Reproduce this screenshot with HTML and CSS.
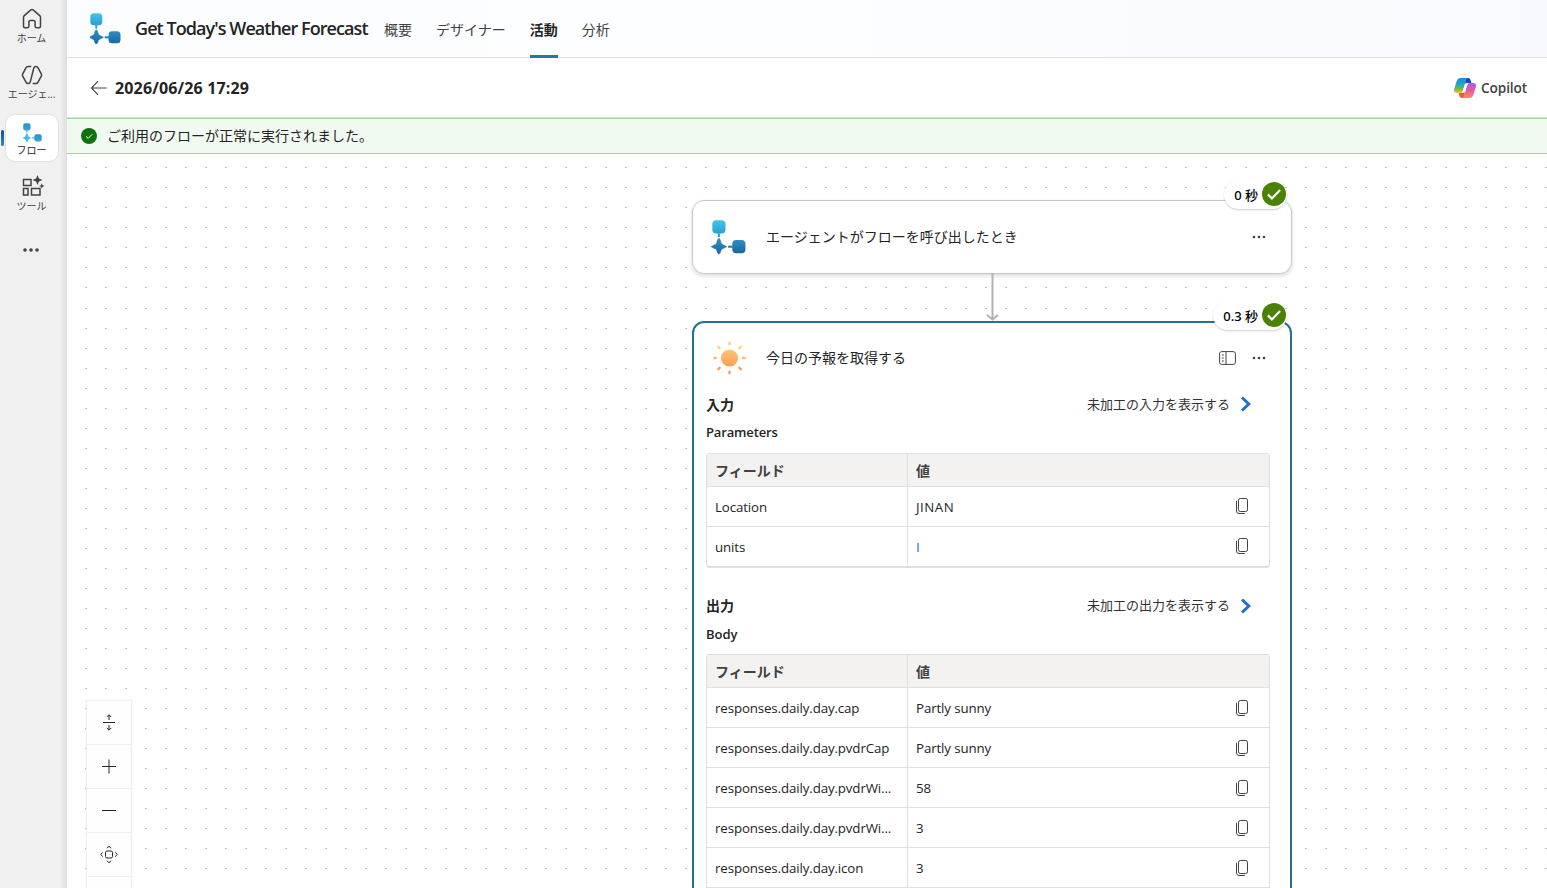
FILE: index.html
```html
<!DOCTYPE html>
<html lang="ja">
<head>
    <meta charset="UTF-8">
    <meta name="viewport" content="width=device-width, initial-scale=1.0">
    <title>Get Today's Weather Forecast</title>
    <link rel="stylesheet" href="styles.css">
</head>
<body>
    <!-- Shared icons -->
    <svg class="defs" width="0" height="0">
        <defs>
            <linearGradient id="flowTop" x1="0" y1="0" x2="0" y2="1">
                <stop offset="0" stop-color="#40c4ea"/><stop offset="1" stop-color="#2d9fd0"/>
            </linearGradient>
            <linearGradient id="flowBottom" x1="0" y1="0" x2="0" y2="1">
                <stop offset="0" stop-color="#2c8fc4"/><stop offset="1" stop-color="#1c669f"/>
            </linearGradient>
            <linearGradient id="flowLight" x1="0" y1="0" x2="0" y2="1">
                <stop offset="0" stop-color="#2a8fc9"/><stop offset="1" stop-color="#36a8d9"/>
            </linearGradient>
            <linearGradient id="sunFill" x1="0" y1="0" x2="0" y2="1">
                <stop offset="0" stop-color="#ffc57c"/><stop offset="1" stop-color="#fd9f51"/>
            </linearGradient>
            <linearGradient id="copBlue" x1="0" y1="0" x2="0" y2="1">
                <stop offset="0" stop-color="#1a8fe6"/><stop offset=".4" stop-color="#24a3c4"/><stop offset=".7" stop-color="#69b65b"/><stop offset="1" stop-color="#f5c518"/>
            </linearGradient>
            <linearGradient id="copPink" x1="0" y1="0" x2="0" y2="1">
                <stop offset="0" stop-color="#a45cf0"/><stop offset=".5" stop-color="#ea5a9b"/><stop offset="1" stop-color="#fb8a6a"/>
            </linearGradient>
            <symbol id="flow" viewBox="0 0 31 31" overflow="visible">
                <rect x="0.3" y="0.3" width="12" height="12" rx="3.6" fill="url(#flowTop)"/>
                <path d="M5.3 12h1.9v3.6H5.3z" fill="#2d9fd0"/>
                <path d="M6.3 16.8c1.7 0 1.4 4.200 2.900 5.300l4.300 2.200-4.300 2.200c-1.500 1.100-1.200 4.500-2.900 4.500s-1.400-3.400-2.900-4.500l-4.300-2.200 4.300-2.200C4.900 21 4.600 16.800 6.300 16.800z" fill="url(#flowBottom)" stroke="#237ab0" stroke-width=".5"/>
                <path d="M14.7 23.4H19v1.9h-4.3z" fill="#237ab0"/>
                <rect x="18.5" y="18.3" width="12" height="12" rx="3.6" fill="url(#flowBottom)"/>
            </symbol>
            <symbol id="copy" viewBox="0 0 14 18">
                <rect x="3.5" y="1.5" width="9" height="13" rx="1.8"/>
                <path d="M1.5 3.8v10.200a2.500 2.500 0 0 0 2.500 2.500h5.800"/>
            </symbol>
            <symbol id="dots" viewBox="0 0 14 4">
                <circle cx="2" cy="2" r="1.3"/><circle cx="7" cy="2" r="1.3"/><circle cx="12" cy="2" r="1.3"/>
            </symbol>
            <symbol id="chevron" viewBox="0 0 12 16">
                <path d="M2 1.500L8.800 8 2 14.500"/>
            </symbol>
            <symbol id="done" viewBox="0 0 24 24">
                <circle cx="12" cy="12" r="12" fill="#498205"/>
                <path d="M5.900 12.400l4 4 8.200-8.500" fill="none" stroke="#fff" stroke-width="2.2"/>
            </symbol>
        </defs>
    </svg>

    <!-- Left navigation -->
    <nav class="sidebar">
        <a class="nav-item">
            <svg class="nav-icon" viewBox="0 0 24 24"><path d="M3.500 10.400c0-.7.300-1.300.8-1.800l6.300-5.500c.8-.7 2-.7 2.800 0l6.300 5.500c.5.500.8 1.100.8 1.800v8.800c0 .900-.6 1.500-1.500 1.500h-2.500c-.8 0-1.400-.6-1.400-1.400V15c0-.8-.6-1.400-1.400-1.400h-3.400c-.8 0-1.400.6-1.400 1.400v4.300c0 .800-.6 1.400-1.400 1.400H5c-.9 0-1.500-.6-1.500-1.500z"/></svg>
            <span>ホーム</span>
        </a>
        <a class="nav-item">
            <svg class="nav-icon" viewBox="0 0 24 24"><path d="M11.300 3.500H8.100c-.9 0-1.600.4-2 1.200l-3.400 6.200c-.4.700-.4 1.500 0 2.200l3.400 6.200c.4.800 1.100 1.200 2 1.200h.2c.9 0 1.600-.5 1.900-1.400L13.800 5c.3-.9 1-1.500 1.900-1.500s1.800.4 2.200 1.200l3.400 6.200c.4.700.4 1.500 0 2.200l-3.400 6.200c-.4.800-1.100 1.200-2 1.200h-3.200"/></svg>
            <span>エージェ...</span>
        </a>
        <a class="nav-item active">
            <svg class="nav-icon flow-small" viewBox="0 0 31 31">
                <rect x="0.3" y="0.3" width="12" height="12" rx="3.6" fill="url(#flowLight)"/>
                <path d="M5.3 12h1.9v3.6H5.3z" fill="#2d9fd0"/>
                <path d="M6.3 16.8c1.7 0 1.4 4.200 2.900 5.300l4.300 2.200-4.300 2.200c-1.500 1.100-1.200 4.500-2.900 4.500s-1.400-3.400-2.900-4.500l-4.300-2.200 4.300-2.200C4.900 21 4.600 16.800 6.300 16.800z" fill="#3cc0e8"/>
                <path d="M14.7 23.4H19v1.9h-4.3z" fill="#36b0de"/>
                <rect x="18.5" y="18.3" width="12" height="12" rx="3.6" fill="url(#flowLight)"/>
            </svg>
            <span>フロー</span>
        </a>
        <a class="nav-item">
            <svg class="nav-icon tools" viewBox="0 0 24 24"><path d="M3.500 5.500h7.500v6H3.500zM3.500 14.500h4.500v6.500H3.500zM11.500 14.500h8.500v6.500h-8.500z"/><path class="solid" d="M17.500 1l1.400 3.600 3.600 1.400-3.600 1.400-1.400 3.600-1.400-3.600-3.600-1.400 3.600-1.400zM21.800 9.200l.8 2 2 .8-2 .8-.8 2-.8-2-2-.8 2-.8z"/></svg>
            <span>ツール</span>
        </a>
        <a class="nav-more"><svg viewBox="0 0 16 4"><circle cx="2" cy="2" r="1.8"/><circle cx="8" cy="2" r="1.8"/><circle cx="14" cy="2" r="1.8"/></svg></a>
    </nav>

    <div class="page">
        <!-- Header -->
        <header class="header">
            <svg class="header-logo"><use href="#flow"/></svg>
            <h1>Get Today's Weather Forecast</h1>
            <div class="tabs">
                <a>概要</a>
                <a>デザイナー</a>
                <a class="selected">活動</a>
                <a>分析</a>
            </div>
        </header>

        <div class="run-bar">
            <svg class="back" viewBox="0 0 18 16"><path d="M16.500 8H1.500M8 1.200L1.500 8 8 14.800"/></svg>
            <h2>2026/06/26 17:29</h2>
            <button class="copilot">
                <svg viewBox="0 0 22 20">
                    <path d="M11 0h3c1.800 0 2.300 1.300 2.800 3l.6 2.200h-3.200c-1.600 0-2.200.6-2.800 2.200z" fill="#203fc0"/>
                    <path d="M11 20H8c-1.800 0-2.300-1.300-2.800-3l-.6-2.200h3.200c1.600 0 2.200-.6 2.800-2.200z" fill="#ee5a36"/>
                    <path d="M6.500 0h8c-1.700.3-2.300 1.600-2.800 3.300L9.400 11c-.7 2.400-1.700 4-4.200 4H2.800C.5 15-.5 13.500.2 11L2.600 3.300C3.300 1.200 4.500 0 6.500 0z" fill="url(#copBlue)"/>
                    <path d="M15.500 20h-8c1.700-.3 2.300-1.600 2.800-3.300L12.600 9c.7-2.400 1.700-4 4.200-4h2.400c2.300 0 3.300 1.500 2.600 4l-2.400 7.700c-.7 2.100-1.900 3.300-3.900 3.300z" fill="url(#copPink)"/>
                    <path d="M12.200 5.200h2.300c-1 .7-1.500 2-1.900 3.300l-1.500 4.700c-.4 1.200-.8 1.600-1.900 1.600H7.300c1.200-.6 1.700-2 2.100-3.300l1.200-4c.4-1.400.7-2.300 1.600-2.300z" fill="#fff"/>
                </svg>
                Copilot
            </button>
        </div>

        <div class="banner">
            <svg viewBox="0 0 16 16"><circle cx="8" cy="8" r="8" fill="#107010"/><path d="M5 8.300l2.200 2.100 4-4.100" fill="none" stroke="#fff"/></svg>
            <span>ご利用のフローが正常に実行されました。</span>
        </div>

        <!-- Flow canvas -->
        <main class="canvas">
            <svg class="grid" width="1480" height="734">
                <defs>
                    <pattern id="gridA" width="20" height="20" patternUnits="userSpaceOnUse"><rect x="18" y="13" width="2" height="1" fill="#bdbdbd"/></pattern>
                    <pattern id="gridB" width="20" height="20" patternUnits="userSpaceOnUse"><rect x="18" y="14" width="2" height="1" fill="#bdbdbd"/></pattern>
                </defs>
                <rect width="1480" height="140" fill="url(#gridA)"/>
                <rect y="140" width="1480" height="594" fill="url(#gridB)"/>
            </svg>

            <section class="node trigger">
                <div class="node-head">
                    <svg class="node-icon"><use href="#flow"/></svg>
                    <span class="node-title">エージェントがフローを呼び出したとき</span>
                    <svg class="more"><use href="#dots"/></svg>
                </div>
                <div class="time">0 秒<svg><use href="#done"/></svg></div>
            </section>

            <section class="node action">
                <div class="node-head">
                    <svg class="node-icon" viewBox="0 0 34 34">
                        <circle cx="17.5" cy="17" r="8.600" fill="url(#sunFill)"/>
                        <g fill="none" stroke-width="2.300" stroke-linecap="round">
                            <path stroke="#ffd072" d="M17.500 1.700v1.600M6.200 5.700l1.500 1.500M28.800 5.700l-1.500 1.500"/>
                            <path stroke="#ffbd70" d="M2.200 17h1.800M31 17h1.800"/>
                            <path stroke="#fb9a58" d="M6.200 28.300l1.500-1.500M28.800 28.300l-1.500-1.500M17.500 30.700v1.600"/>
                        </g>
                    </svg>
                    <span class="node-title">今日の予報を取得する</span>
                    <svg class="panel" viewBox="0 0 17 14"><rect x=".6" y=".6" width="15.800" height="12.800" rx="2.200"/><path d="M7 .6v12.800M2.800 4h2M2.800 7h2M2.800 10h2"/></svg>
                    <svg class="more"><use href="#dots"/></svg>
                </div>

                <div class="block">
                    <div class="block-head">
                        <h3>入力</h3>
                        <a><span>未加工の入力を表示する</span><svg><use href="#chevron"/></svg></a>
                    </div>
                    <h4>Parameters</h4>
                    <div class="table">
                        <div class="row head"><span>フィールド</span><span>値</span></div>
                        <div class="row"><span>Location</span><span class="wide">JINAN</span><svg><use href="#copy"/></svg></div>
                        <div class="row"><span>units</span><span class="value-blue">I</span><svg><use href="#copy"/></svg></div>
                    </div>
                </div>

                <div class="block output">
                    <div class="block-head">
                        <h3>出力</h3>
                        <a><span>未加工の出力を表示する</span><svg><use href="#chevron"/></svg></a>
                    </div>
                    <h4>Body</h4>
                    <div class="table">
                        <div class="row head"><span>フィールド</span><span>値</span></div>
                        <div class="row"><span>responses.daily.day.cap</span><span>Partly sunny</span><svg><use href="#copy"/></svg></div>
                        <div class="row"><span>responses.daily.day.pvdrCap</span><span>Partly sunny</span><svg><use href="#copy"/></svg></div>
                        <div class="row"><span>responses.daily.day.pvdrWi...</span><span>58</span><svg><use href="#copy"/></svg></div>
                        <div class="row"><span>responses.daily.day.pvdrWi...</span><span>3</span><svg><use href="#copy"/></svg></div>
                        <div class="row"><span>responses.daily.day.icon</span><span>3</span><svg><use href="#copy"/></svg></div>
                        <div class="row"></div>
                    </div>
                </div>
                <div class="time">0.3 秒<svg><use href="#done"/></svg></div>
            </section>

            <svg class="arrow" viewBox="0 0 14 50"><path d="M7.500 0v46" stroke-width="2"/><path d="M2 42l5.500 4.500L13 42" stroke-width="2"/></svg>

            <!-- Zoom controls -->
            <div class="controls">
                <div><svg viewBox="0 0 18 18"><path d="M3 9.500h12"/><path d="M9 7V2M6.800 4L9 1.800 11.200 4M9 12v5M6.800 15L9 17.200l2.200-2.200"/></svg></div>
                <div><svg viewBox="0 0 18 18"><path d="M2 9.500h14M9 2.500v14"/></svg></div>
                <div><svg viewBox="0 0 18 18"><path d="M2 9.500h14"/></svg></div>
                <div><svg viewBox="0 0 18 18"><rect x="5.500" y="6" width="7" height="7" rx="1.500"/><path d="M6.800 3.200L9 1.300l2.200 1.900M6.800 15.800L9 17.700l2.200-1.900M2.700 7.300L.8 9.500l1.900 2.200M15.300 7.300l1.900 2.200-1.900 2.200"/></svg></div>
                <div></div>
            </div>
        </main>
    </div>
</body>
</html>
```
FILE: styles.css
```css
* {
    box-sizing: border-box;
}

body {
    margin: 0;
    height: 888px;
    display: flex;
    overflow: hidden;
    background-color: #f0f0f0;
    font-family: "Open Sans", "Noto Sans CJK JP", sans-serif;
    font-size: 14px;
    color: #242424;
}

h1, h2, h3, h4 {
    margin: 0;
    font-weight: 600;
}

svg {
    display: block;
    flex: none;
}

.defs {
    position: absolute;
}

/* Left navigation */
.sidebar {
    width: 67px;
    flex: none;
    display: flex;
    flex-direction: column;
    gap: 8px;
    padding: 2px 8px 0 5px;
    background: linear-gradient(to right, #f0f0f0 60px, #dedede 67px);
}

.nav-item {
    position: relative;
    height: 48px;
    display: flex;
    flex-direction: column;
    align-items: center;
    padding: 4px 1px 0 0;
    border: 1px solid transparent;
    border-radius: 10px;
    font-size: 10px;
    line-height: 14px;
    color: #424242;
    white-space: nowrap;
}

.nav-icon {
    width: 24px;
    height: 24px;
    margin-left: 1px;
    fill: none;
    stroke: #424242;
    stroke-width: 1.5;
}

.nav-icon .solid {
    fill: #424242;
    stroke: none;
}

.tools {
    overflow: visible;
    margin-top: -1px;
    margin-bottom: 1px;
}

.nav-item.active {
    background-color: #fff;
    border-color: #e0e0e0;
    color: #242424;
}

.nav-item.active::before {
    content: "";
    position: absolute;
    left: -5px;
    top: 15px;
    width: 3px;
    height: 16px;
    border-radius: 2px;
    background: linear-gradient(#17478f, #2a8fc4);
}

.flow-small {
    width: 19px;
    height: 19px;
    margin: 4px 0 1px 1px;
    stroke: none;
    overflow: visible;
}

.nav-more {
    display: flex;
    justify-content: center;
    padding-top: 22px;
}

.nav-more svg {
    width: 16px;
    height: 4px;
    margin-right: 2px;
    fill: #424242;
}

/* Header */
.page {
    flex: 1;
    min-width: 0;
    display: flex;
    flex-direction: column;
    background-color: #fff;
}

.header {
    height: 58px;
    flex: none;
    display: flex;
    align-items: center;
    padding-left: 23px;
    border-bottom: 1px solid #e0e0e0;
    background: linear-gradient(to right, #fcfdff, #fdfeff 50%, #f8f9fe);
}

.header-logo {
    width: 31px;
    height: 31px;
    margin-top: -1px;
}

.header h1 {
    width: 233px;
    margin-left: 14px;
    margin-top: -1px;
    font-size: 18px;
    font-weight: 650;
    letter-spacing: -0.93px;
    white-space: nowrap;
}

.tabs {
    display: flex;
    align-self: stretch;
    gap: 24px;
    margin-left: 16px;
    margin-bottom: -1px;
    line-height: 60px;
    color: #424242;
}

.tabs .selected {
    height: 58px;
    border-bottom: 3px solid #1f7ba6;
    font-weight: 700;
    color: #242424;
}

.run-bar {
    height: 60px;
    flex: none;
    display: flex;
    align-items: center;
    padding: 0 20px 0 23px;
    border-bottom: 1px solid #e0e0e0;
}

.back {
    width: 18px;
    height: 16px;
    fill: none;
    stroke: #424242;
    stroke-width: 1.1;
}

.run-bar h2 {
    margin-left: 7px;
    font-size: 16px;
    font-weight: 700;
    letter-spacing: 0.15px;
}

.copilot {
    display: flex;
    align-items: center;
    gap: 5px;
    margin-left: auto;
    padding: 0;
    border: none;
    background: none;
    font: 600 13.7px "Open Sans", sans-serif;
    letter-spacing: -0.15px;
    color: #424242;
}

.copilot svg {
    width: 22px;
    height: 20px;
}

.banner {
    height: 36px;
    flex: none;
    display: flex;
    align-items: center;
    gap: 10px;
    padding-left: 14px;
    border-top: 1px solid #9fd89f;
    border-bottom: 1px solid #9fd89f;
    background-color: #f1faf1;
}

.banner span {
    margin-top: -2px;
}

.banner svg {
    width: 16px;
    height: 16px;
}

/* Flow canvas */
.canvas {
    position: relative;
    flex: 1;
    overflow: hidden;
}

.grid {
    position: absolute;
    left: 0;
    top: 0;
}

.node {
    position: absolute;
    left: 625px;
    width: 600px;
    border-radius: 12px;
    background-color: #fff;
}

.trigger {
    top: 46px;
    height: 74px;
    border: 1px solid #c8c8c8;
    box-shadow: 0 2px 4px rgba(0, 0, 0, 0.14);
}

.action {
    top: 167px;
    height: 900px;
    border: 2px solid #1f7299;
    padding: 0 12px;
}

.node-head {
    height: 72px;
    display: flex;
    align-items: center;
    padding: 0 25px 0 19px;
}

.action .node-head {
    height: 70px;
    margin: 0 -12px;
    padding: 0 24px 0 18px;
}

.node-icon {
    width: 34px;
    height: 34px;
    margin-right: 20px;
    overflow: visible;
}

.node-title {
    flex: 1;
    margin-top: -2px;
}

.more {
    width: 14px;
    height: 4px;
    fill: #424242;
}

.panel {
    width: 17px;
    height: 14px;
    margin-right: 16px;
    fill: none;
    stroke: #424242;
}

.time {
    position: absolute;
    right: 4px;
    top: -21px;
    height: 29px;
    display: flex;
    align-items: center;
    gap: 4px;
    padding: 0 1px 0 10px;
    border-radius: 15px;
    background-color: #fff;
    box-shadow: 0 1px 2px rgba(0, 0, 0, 0.2);
    font-family: "Noto Sans", "Noto Sans CJK JP", sans-serif;
    font-size: 13px;
    font-weight: 500;
    color: #000;
}

.action .time {
    right: 3px;
    top: -22px;
}

.time svg {
    width: 24px;
    height: 24px;
    margin-top: -1px;
}

.arrow {
    position: absolute;
    left: 918px;
    top: 119px;
    width: 14px;
    height: 50px;
    fill: none;
    stroke: #b1b1b7;
}

/* Inputs and outputs */
.block {
    padding: 0 8px 26px 0;
}

.block-head {
    height: 24px;
    display: flex;
    align-items: center;
    justify-content: space-between;
    margin-top: -1px;
    padding-right: 18px;
}

.block-head h3 {
    font-size: 14px;
    font-weight: 700;
}

.block-head a {
    display: flex;
    align-items: center;
    gap: 10px;
    font-size: 13px;
    color: #323130;
}

.block-head a span {
    margin-top: -1px;
}

.block-head a svg {
    width: 12px;
    height: 16px;
    fill: none;
    stroke: #2170cf;
    stroke-width: 3;
}

.output .block-head a svg {
    margin-top: 1px;
}

.block h4 {
    height: 37px;
    line-height: 33px;
    font-size: 13px;
    letter-spacing: -0.15px;
}

.output h4 {
    line-height: 35px;
    letter-spacing: 0;
}

.table {
    border: 1px solid #dfdfdf;
    border-bottom-width: 2px;
    border-radius: 4px;
    overflow: hidden;
}

.row {
    height: 40px;
    display: flex;
    border-top: 1px solid #e0e0e0;
    line-height: 40px;
    font-size: 13.3px;
    letter-spacing: -0.12px;
}

.row span {
    flex: 1;
    padding-left: 8px;
}

.row span:first-child {
    flex: 0 0 201px;
    border-right: 1px solid #e0e0e0;
    white-space: nowrap;
}

.row.head {
    height: 32px;
    border-top: none;
    background-color: #f3f2f1;
    line-height: 34px;
    font-size: 14px;
    font-weight: 700;
    letter-spacing: 0;
    color: #424242;
}

.row .wide {
    letter-spacing: 0.5px;
}

.row svg {
    width: 14px;
    height: 18px;
    margin: 10px 20px 0 0;
    fill: none;
    stroke: #424242;
}

.output .row svg {
    margin-top: 11px;
}

.value-blue {
    color: #0f6cbd;
}

/* Zoom controls */
.controls {
    position: absolute;
    left: 19px;
    top: 546px;
    width: 46px;
    border: 1px solid #f0f0f0;
    background-color: #fefefe;
    box-shadow: 0 0 2px rgba(0, 0, 0, 0.08);
}

.controls div {
    height: 44px;
    display: flex;
    align-items: center;
    justify-content: center;
    padding-bottom: 2px;
    border-bottom: 1px solid #eee;
}

.controls svg {
    width: 18px;
    height: 18px;
    fill: none;
    stroke: #242424;
}
```
